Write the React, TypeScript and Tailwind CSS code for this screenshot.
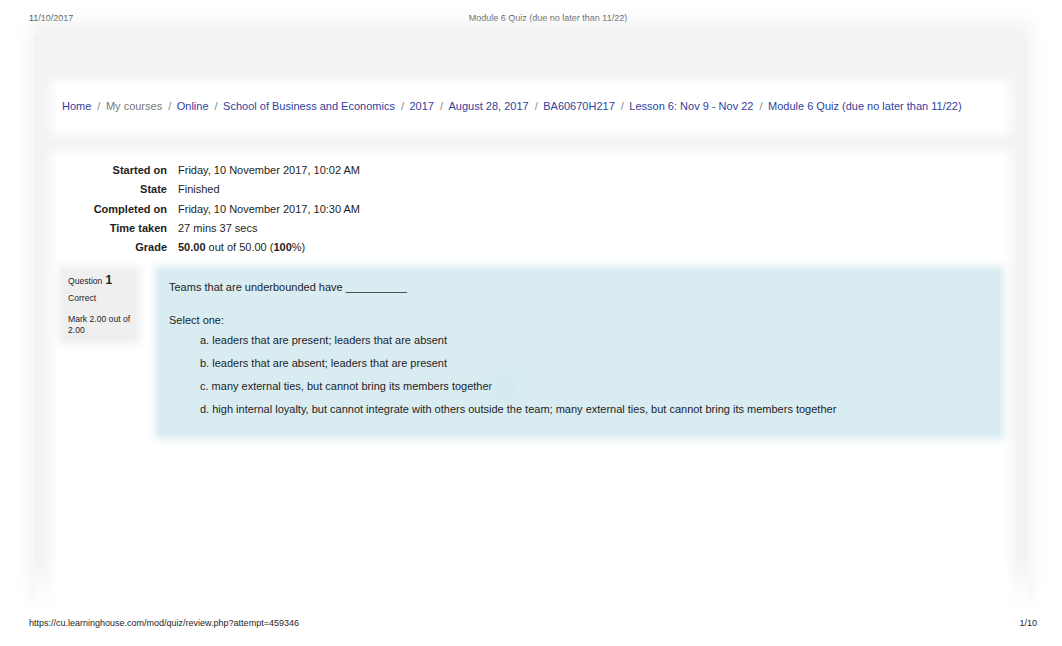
import React from 'react'

const crumbs = [
  { label: 'Home', muted: false },
  { label: 'My courses', muted: true },
  { label: 'Online', muted: false },
  { label: 'School of Business and Economics', muted: false },
  { label: '2017', muted: false },
  { label: 'August 28, 2017', muted: false },
  { label: 'BA60670H217', muted: false },
  { label: 'Lesson 6: Nov 9 - Nov 22', muted: false },
  { label: 'Module 6 Quiz (due no later than 11/22)', muted: false },
]

const options = [
  'a. leaders that are present; leaders that are absent',
  'b. leaders that are absent; leaders that are present',
  'c. many external ties, but cannot bring its members together',
  'd. high internal loyalty, but cannot integrate with others outside the team; many external ties, but cannot bring its members together',
]

export default function App() {
  return (
    <div className="w-[1062px] h-[646px] bg-white overflow-hidden flex flex-col font-['Liberation_Sans',Arial,sans-serif] text-[#1e1e1e]">
      {/* Print header */}
      <div className="grid grid-cols-[1fr_auto_1fr] px-[29px] pt-[13px] text-[9px] leading-[10px]">
        <span>11/10/2017</span>
        <span className="pl-[34px]">Module 6 Quiz (due no later than 11/22)</span>
        <span />
      </div>

      {/* Page frame */}
      <div className="mt-[12px] mx-[34px] h-[570px] bg-linear-to-b from-[#f3f3f3] from-92% to-white shadow-[0_-10px_16px_4px_#f3f3f3] flex flex-col pt-[50px] px-[22px]">
        {/* Breadcrumb */}
        <div className="h-[45px] bg-white shadow-[0_0_10px_5px_#fff] flex items-center pl-[6px] pb-[3px] text-[11px]">
          {crumbs.map((c, i) => (
            <React.Fragment key={c.label}>
              {i > 0 && <span className="pl-[6px] pr-[5.5px] text-[#888]">/</span>}
              <span className={c.muted ? 'text-[#777]' : 'text-[#2f3f9e]'}>{c.label}</span>
            </React.Fragment>
          ))}
        </div>

        {/* Content */}
        <div className="mt-[26px] flex-1 bg-white shadow-[0_0_10px_5px_#fff] pt-[5px]">
          <div className="grid grid-cols-[111px_1fr] gap-x-[11px] text-[11px] leading-[19.3px]">
            <span className="text-right font-bold">Started on</span>
            <span>Friday, 10 November 2017, 10:02 AM</span>
            <span className="text-right font-bold">State</span>
            <span>Finished</span>
            <span className="text-right font-bold">Completed on</span>
            <span>Friday, 10 November 2017, 10:30 AM</span>
            <span className="text-right font-bold">Time taken</span>
            <span>27 mins 37 secs</span>
            <span className="text-right font-bold">Grade</span>
            <span>
              <b>50.00</b> out of 50.00 (<b>100</b>%)
            </span>
          </div>

          <div className="mt-[13px] flex items-start">
            <div className="ml-[6px] w-[74px] h-[70px] bg-[#efefef] shadow-[0_0_8px_4px_#efefef] pl-[6px] pr-0 pt-[5px] text-[8.6px] leading-[11px]">
              <div className="flex items-baseline gap-[3px]">
                <span>Question</span>
                <span className="text-[12px] font-bold">1</span>
              </div>
              <div className="mt-[6px]">Correct</div>
              <div className="mt-[10px] w-[66px]">Mark 2.00 out of 2.00</div>
            </div>

            <div className="relative ml-[23px] w-[841px] h-[165px] bg-[#d8ecf2] shadow-[0_0_8px_4px_#daedf2] pl-[10px] pt-[10px] text-[11px] leading-[14px]">
              <div>Teams that are underbounded have __________</div>
              <div className="mt-[19px]">Select one:</div>
              <div className="mt-[6px] pl-[31px] flex flex-col gap-[9px]">
                {options.map((o) => (
                  <div key={o}>{o}</div>
                ))}
              </div>
              <div className="absolute left-[334px] top-[104px] w-[24px] h-[24px] rounded-full bg-[#d4e8ee] blur-[3px]" />
            </div>
          </div>
        </div>
      </div>

      {/* Print footer */}
      <div className="flex justify-between pl-[29px] pr-[25px] mt-[13px] text-[9px] leading-[10px]">
        <span>https://cu.learninghouse.com/mod/quiz/review.php?attempt=459346</span>
        <span>1/10</span>
      </div>
    </div>
  )
}
